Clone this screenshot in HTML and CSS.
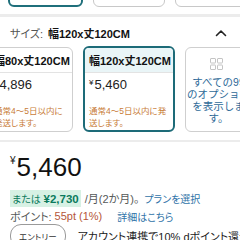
FILE: index.html
```html
<!DOCTYPE html>
<html lang="ja">
<head>
<meta charset="utf-8">
<link rel="stylesheet" href="styles.css">
</head>
<body>
<div class="page">
  <div class="top-row">
    <div class="top-box selected"></div>
    <div class="top-box"></div>
    <div class="top-box wide"></div>
  </div>
  <div class="sep"></div>
  <div class="size-line">
    <span class="size-label">サイズ:</span>
    <span class="size-value">幅120x丈120CM</span>
    <svg class="chev" width="12" height="8" viewBox="0 0 12 8"><path d="M1.5 6.5 L6 2 L10.5 6.5" fill="none" stroke="#222" stroke-width="1.6" stroke-linecap="round" stroke-linejoin="round"/></svg>
  </div>
  <div class="cards">
    <div class="card first">
      <div class="card-head">幅80x丈120CM</div>
      <div class="card-body">
        <div class="card-price"><span class="yen">¥</span>4,896</div>
        <div class="ship">通常4～5日以内に<br>発送します。</div>
      </div>
    </div>
    <div class="card active">
      <div class="card-head">幅120x丈120CM</div>
      <div class="card-body">
        <div class="card-price"><span class="yen">¥</span>5,460</div>
        <div class="ship">通常4～5日以内に発<br>送します。</div>
      </div>
    </div>
    <div class="card more">
      <svg class="grid-ic" width="13" height="12" viewBox="0 0 13 12"><g fill="none" stroke="#c4c4c4" stroke-width="1"><rect x="0.5" y="0.5" width="5" height="4.5" rx="0.5"/><rect x="7.5" y="0.5" width="5" height="4.5" rx="0.5"/><rect x="0.5" y="7" width="5" height="4.5" rx="0.5"/><rect x="7.5" y="7" width="5" height="4.5" rx="0.5"/></g></svg>
      <div class="more-text">すべての99<br>のオプション<br>を表示しま<br>す。</div>
    </div>
  </div>
  <div class="sep sep2"></div>
  <div class="price"><span class="price-yen">¥</span><span class="price-num">5,460</span></div>
  <div class="line install">
    <span class="hl"><span class="green">または</span> <b class="green">¥2,730</b></span>
    <span class="muted">/月(2か月)。</span>
    <span class="link">プランを選択</span>
  </div>
  <div class="line points">
    <span class="muted">ポイント:</span>
    <span class="red">55pt (1%)</span>
    <span class="link far">詳細はこちら</span>
  </div>
  <div class="entry-row">
    <span class="pill">エントリー</span>
    <span class="entry-text">アカウント連携で10% dポイント還元</span>
  </div>
</div>
</body>
</html>
```

FILE: styles.css
```css
html, body {
  margin: 0;
  padding: 0;
  background: #fff;
}
body {
  font-family: "Liberation Sans", Arial, "Noto Sans CJK JP", sans-serif;
  color: #111;
  font-feature-settings: "palt";
  overflow: hidden;
  width: 240px;
  height: 240px;
}
.page {
  width: 240px;
  overflow: hidden;
}
.top-row {
  display: flex;
  gap: 10px;
  margin-top: -23px;
  padding-left: 8px;
  height: 30px;
}
.top-box {
  width: 72px;
  height: 30px;
  border: 1px solid #c8c8c8;
  border-radius: 6px;
  box-sizing: border-box;
  flex: none;
}
.top-box.selected {
  width: 75px;
  border: 2px solid #1f6f7b;
}
.top-box.wide {
  width: 80px;
}
.sep {
  height: 3px;
  background: #ececec;
  margin-top: 7px;
}
.size-line {
  display: flex;
  align-items: center;
  height: 14px;
  margin-top: 9px;
  padding-left: 10px;
  font-size: 11px;
}
.size-label {
  color: #555;
  margin-right: 5px;
}
.size-value {
  font-weight: bold;
  color: #111;
}
.chev {
  margin-left: auto;
  margin-right: 13px;
}
.cards {
  display: flex;
  align-items: flex-start;
  gap: 10px;
  margin-top: 6px;
  margin-left: -13px;
}
.card {
  flex: none;
  width: 92px;
  height: 85px;
  box-sizing: border-box;
  border: 1px solid #cfcfcf;
  border-radius: 6px;
  overflow: hidden;
  margin-top: 1px;
}
.card.first {
  width: 86px;
}
.card.active {
  border: 2px solid #1d6b78;
  height: 86px;
  margin-top: 0;
}
.card-head {
  height: 24px;
  display: flex;
  align-items: center;
  padding-left: 6px;
  font-size: 11px;
  font-weight: bold;
  border-bottom: 1px solid #e3e3e3;
  white-space: nowrap;
}
.card.active .card-head {
  background: #e9f5f7;
  padding-left: 4px;
  height: 24px;
}
.card-body {
  padding: 2px 5px 0 6px;
}
.card.active .card-body {
  padding-left: 4px;
}
.card-price {
  font-size: 13px;
  line-height: 16px;
  color: #222;
}
.yen {
  font-size: 8px;
  vertical-align: 4px;
  margin-right: 1px;
}
.ship {
  margin-top: 12px;
  font-size: 8.5px;
  line-height: 12px;
  color: #c87c38;
  white-space: nowrap;
}
.card.more {
  width: 62px;
  height: 85px;
  display: flex;
  flex-direction: column;
  align-items: center;
  padding-top: 10px;
  padding-left: 5px;
  overflow: visible;
}
.grid-ic {
  display: block;
  margin-left: -4px;
}
.more-text {
  margin-top: 6px;
  font-size: 10.5px;
  line-height: 12px;
  color: #2e6a98;
  text-align: center;
  white-space: nowrap;
  font-feature-settings: normal;
}
.sep2 {
  margin-top: 8px;
  height: 2px;
}
.price {
  display: flex;
  align-items: flex-start;
  padding-left: 10px;
  margin-top: 10px;
  height: 30px;
}
.price-yen {
  font-size: 10px;
  margin-top: 3px;
  margin-right: 1px;
  color: #222;
}
.price-num {
  font-size: 26px;
  line-height: 30px;
  color: #111;
}
.line {
  display: flex;
  align-items: center;
  gap: 3px;
  padding-left: 10px;
  font-size: 11px;
  height: 14px;
  white-space: nowrap;
}
.install {
  margin-top: 9px;
  gap: 4px;
}
.hl {
  background: #d7f1e4;
  padding: 1px 2px 1px 2px;
  font-size: 10px;
}
.green {
  color: #0a7a5c;
}
b.green {
  font-size: 11.5px;
}
.muted {
  color: #565959;
}
.link {
  color: #2f73a8;
  margin-left: 1px;
  font-size: 10px;
}
.link.far {
  margin-left: 12px;
}
.points {
  margin-top: 4px;
}
.red {
  color: #b5563a;
}
.entry-row {
  display: flex;
  align-items: center;
  padding-left: 10px;
  margin-top: 1px;
  gap: 12px;
  white-space: nowrap;
}
.pill {
  border: 1px solid #9a9a9a;
  border-radius: 11px;
  padding: 5px 8px;
  font-size: 8.5px;
  color: #333;
}
.entry-text {
  font-size: 11px;
  color: #222;
}
```
